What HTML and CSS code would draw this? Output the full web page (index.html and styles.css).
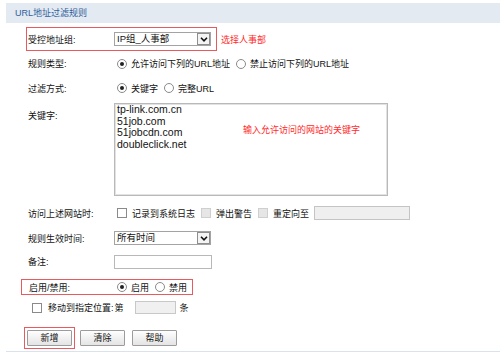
FILE: index.html
```html
<!DOCTYPE html>
<html lang="zh-CN">
<head>
<meta charset="utf-8">
<title>URL地址过滤规则</title>
<link rel="stylesheet" href="styles.css">
</head>
<body>
<div class="page">
  <div class="title">URL地址过滤规则</div>
  <div class="form">
    <div class="row-top">
      <div class="redbox box-group">
        <span class="label">受控地址组:</span>
        <span class="select"><span class="sel-text">IP组_人事部</span><span class="sel-arrow"><svg width="8" height="5" viewBox="0 0 8 5"><path d="M1 0.8 L4 3.8 L7 0.8" fill="none" stroke="#111" stroke-width="1.6"/></svg></span></span>
      </div>
      <span class="note">选择人事部</span>
    </div>
    <div class="row">
      <span class="label">规则类型:</span>
      <span class="radio checked"></span><span class="opt">允许访问下列的URL地址</span>
      <span class="radio"></span><span class="opt">禁止访问下列的URL地址</span>
    </div>
    <div class="row">
      <span class="label">过滤方式:</span>
      <span class="radio checked"></span><span class="opt">关键字</span>
      <span class="radio"></span><span class="opt">完整URL</span>
    </div>
    <div class="row-area">
      <span class="label label-area">关键字:</span>
      <div class="area-wrap">
        <textarea class="area" readonly>tp-link.com.cn
51job.com
51jobcdn.com
doubleclick.net</textarea>
        <span class="note area-note">输入允许访问的网站的关键字</span>
      </div>
    </div>
    <div class="row row-visit">
      <span class="label">访问上述网站时:</span>
      <span class="check"></span><span class="copt">记录到系统日志</span>
      <span class="check disabled"></span><span class="copt">弹出警告</span>
      <span class="check disabled"></span><span class="copt">重定向至</span>
      <span class="input input-redirect"></span>
    </div>
    <div class="row">
      <span class="label">规则生效时间:</span>
      <span class="select"><span class="sel-text">所有时间</span><span class="sel-arrow"><svg width="8" height="5" viewBox="0 0 8 5"><path d="M1 0.8 L4 3.8 L7 0.8" fill="none" stroke="#111" stroke-width="1.6"/></svg></span></span>
    </div>
    <div class="row row-note">
      <span class="label">备注:</span>
      <span class="input input-note"></span>
    </div>
    <div class="redbox box-enable">
      <span class="label label-enable">启用/禁用:</span>
      <span class="radio checked"></span><span class="opt">启用</span>
      <span class="radio"></span><span class="opt">禁用</span>
    </div>
    <div class="row row-move">
      <span class="check"></span><span class="move-text">移动到指定位置:</span>
      <span class="move-di">第</span>
      <span class="input input-pos"></span>
      <span class="move-tiao">条</span>
    </div>
    <div class="buttons">
      <div class="redbox box-btn"><button class="btn" type="button">新增</button></div>
      <button class="btn" type="button">清除</button>
      <button class="btn" type="button">帮助</button>
    </div>
    <div class="footer-line"></div>
  </div>
</div>
</body>
</html>
```

FILE: styles.css
```css
html, body {
  margin: 0;
  padding: 0;
  background: #ffffff;
}

body {
  font-family: "Liberation Sans", "Noto Sans CJK SC", sans-serif;
  font-size: 9px;
  color: #111111;
  width: 500px;
  height: 358px;
  overflow: hidden;
}

.page {
  padding-top: 3px;
}

.title {
  margin-left: 6px;
  height: 20px;
  line-height: 20px;
  padding-left: 9px;
  background: #e3eaf1;
  color: #2f5f9e;
  font-size: 9px;
}

.form {
  padding-top: 4px;
}

.label {
  display: inline-block;
  width: 86px;
  flex: none;
  white-space: nowrap;
}

.row {
  display: flex;
  align-items: center;
  height: 25px;
  padding-left: 28px;
  white-space: nowrap;
}

.row-top {
  display: flex;
  align-items: center;
  margin-left: 26px;
}

.redbox {
  border: 1px solid #e85a5d;
  box-sizing: border-box;
}

.box-group {
  width: 191px;
  height: 24px;
  display: flex;
  align-items: center;
  padding-left: 1px;
}

.note {
  color: #ff2a2a;
  font-size: 9px;
  white-space: nowrap;
}

.row-top .note {
  margin-left: 4px;
}

.select {
  display: flex;
  align-items: center;
  box-sizing: border-box;
  width: 97px;
  height: 14px;
  border: 1px solid #a3a3a3;
  background: #ffffff;
}

.sel-text {
  flex: 1;
  padding-left: 2px;
  font-size: 9.5px;
  color: #111111;
  line-height: 12px;
  white-space: nowrap;
}

.sel-arrow {
  display: flex;
  align-items: center;
  justify-content: center;
  box-sizing: border-box;
  width: 13px;
  height: 12px;
  border: 1px solid #8e8e8e;
  background: #f4f4f4;
}

.sel-arrow svg {
  display: block;
}

.radio {
  position: relative;
  display: inline-block;
  flex: none;
  box-sizing: border-box;
  width: 10px;
  height: 10px;
  border: 1px solid #8a8a8a;
  border-radius: 50%;
  background: #ffffff;
  margin-left: 3px;
}

.opt + .radio {
  margin-left: 0;
}

.radio.checked::after {
  content: "";
  position: absolute;
  left: 2px;
  top: 2px;
  width: 4px;
  height: 4px;
  border-radius: 50%;
  background: #222222;
}

.opt {
  margin: 0 6px 0 4px;
}

.row-area {
  display: flex;
  align-items: flex-start;
  padding-left: 28px;
  padding-top: 3px;
  padding-bottom: 4px;
}

.label-area {
  margin-top: 7px;
  line-height: 12px;
}

.area-wrap {
  position: relative;
}

.area {
  display: block;
  box-sizing: border-box;
  width: 274px;
  height: 93px;
  margin: 0;
  padding: 0 2px;
  border: 1px solid #b9b9b9;
  box-shadow: inset 0 0 0 1px #e2e2e2;
  resize: none;
  overflow: hidden;
  font-family: "Liberation Sans", sans-serif;
  font-size: 10.5px;
  line-height: 11.7px;
  color: #111111;
  background: #ffffff;
}

.area-note {
  position: absolute;
  left: 129px;
  top: 21px;
  line-height: 12px;
}

.row-visit {
  height: 26px;
}

.check {
  display: inline-block;
  flex: none;
  box-sizing: border-box;
  width: 10px;
  height: 10px;
  border: 1px solid #8a8a8a;
  background: #ffffff;
  margin-left: 3px;
}

.copt + .check {
  margin-left: 0;
}

.check.disabled {
  border-color: #cfcfcf;
  background: #e6e6e6;
}

.copt {
  margin: 0 6px 0 5px;
}

.input {
  display: inline-block;
  box-sizing: border-box;
  height: 14px;
  border: 1px solid #b8b8b8;
  background: #ffffff;
}

.input-redirect {
  width: 96px;
  margin-left: -1px;
  background: #efefef;
  border-color: #c4c4c4;
}

.row + .row {
  height: 24px;
}

.row-note {
  height: 23px !important;
}

.input-note {
  width: 98px;
  height: 14px;
}

.box-enable {
  display: flex;
  align-items: center;
  width: 172px;
  height: 16px;
  margin: 6px 0 0 21px;
  padding-left: 7px;
  white-space: nowrap;
}

.label-enable {
  width: 85px;
}

.box-enable .radio {
  margin-left: 3px;
}

.box-enable .opt + .radio {
  margin-left: 0;
}

.row-move {
  height: 25px !important;
  padding-left: 32px;
}

.row-move .check {
  margin-left: 0;
}

.move-text {
  margin-left: 6px;
}

.move-di {
  margin-left: 1px;
}

.input-pos {
  width: 41px;
  height: 13px;
  margin-left: 11px;
  background: #f0f0f0;
  border-color: #c8c8c8;
}

.move-tiao {
  margin-left: 4px;
}

.buttons {
  display: flex;
  align-items: center;
  margin: 7px 0 0 24px;
}

.box-btn {
  padding: 2px;
}

.btn {
  display: block;
  box-sizing: border-box;
  width: 45px;
  height: 16px;
  margin: 0;
  padding: 0;
  border: 1px solid #9c9c9c;
  border-radius: 1px;
  background: linear-gradient(#fefefe, #e4e4e4);
  font-family: "Noto Sans CJK SC", sans-serif;
  font-size: 9px;
  line-height: 14px;
  color: #111111;
}

.buttons > .btn {
  margin-left: 5px;
}

.buttons > .btn + .btn {
  margin-left: 7px;
}

.footer-line {
  margin: 2px 0 0 6px;
  height: 1px;
  background: #d9e3ee;
}
```
